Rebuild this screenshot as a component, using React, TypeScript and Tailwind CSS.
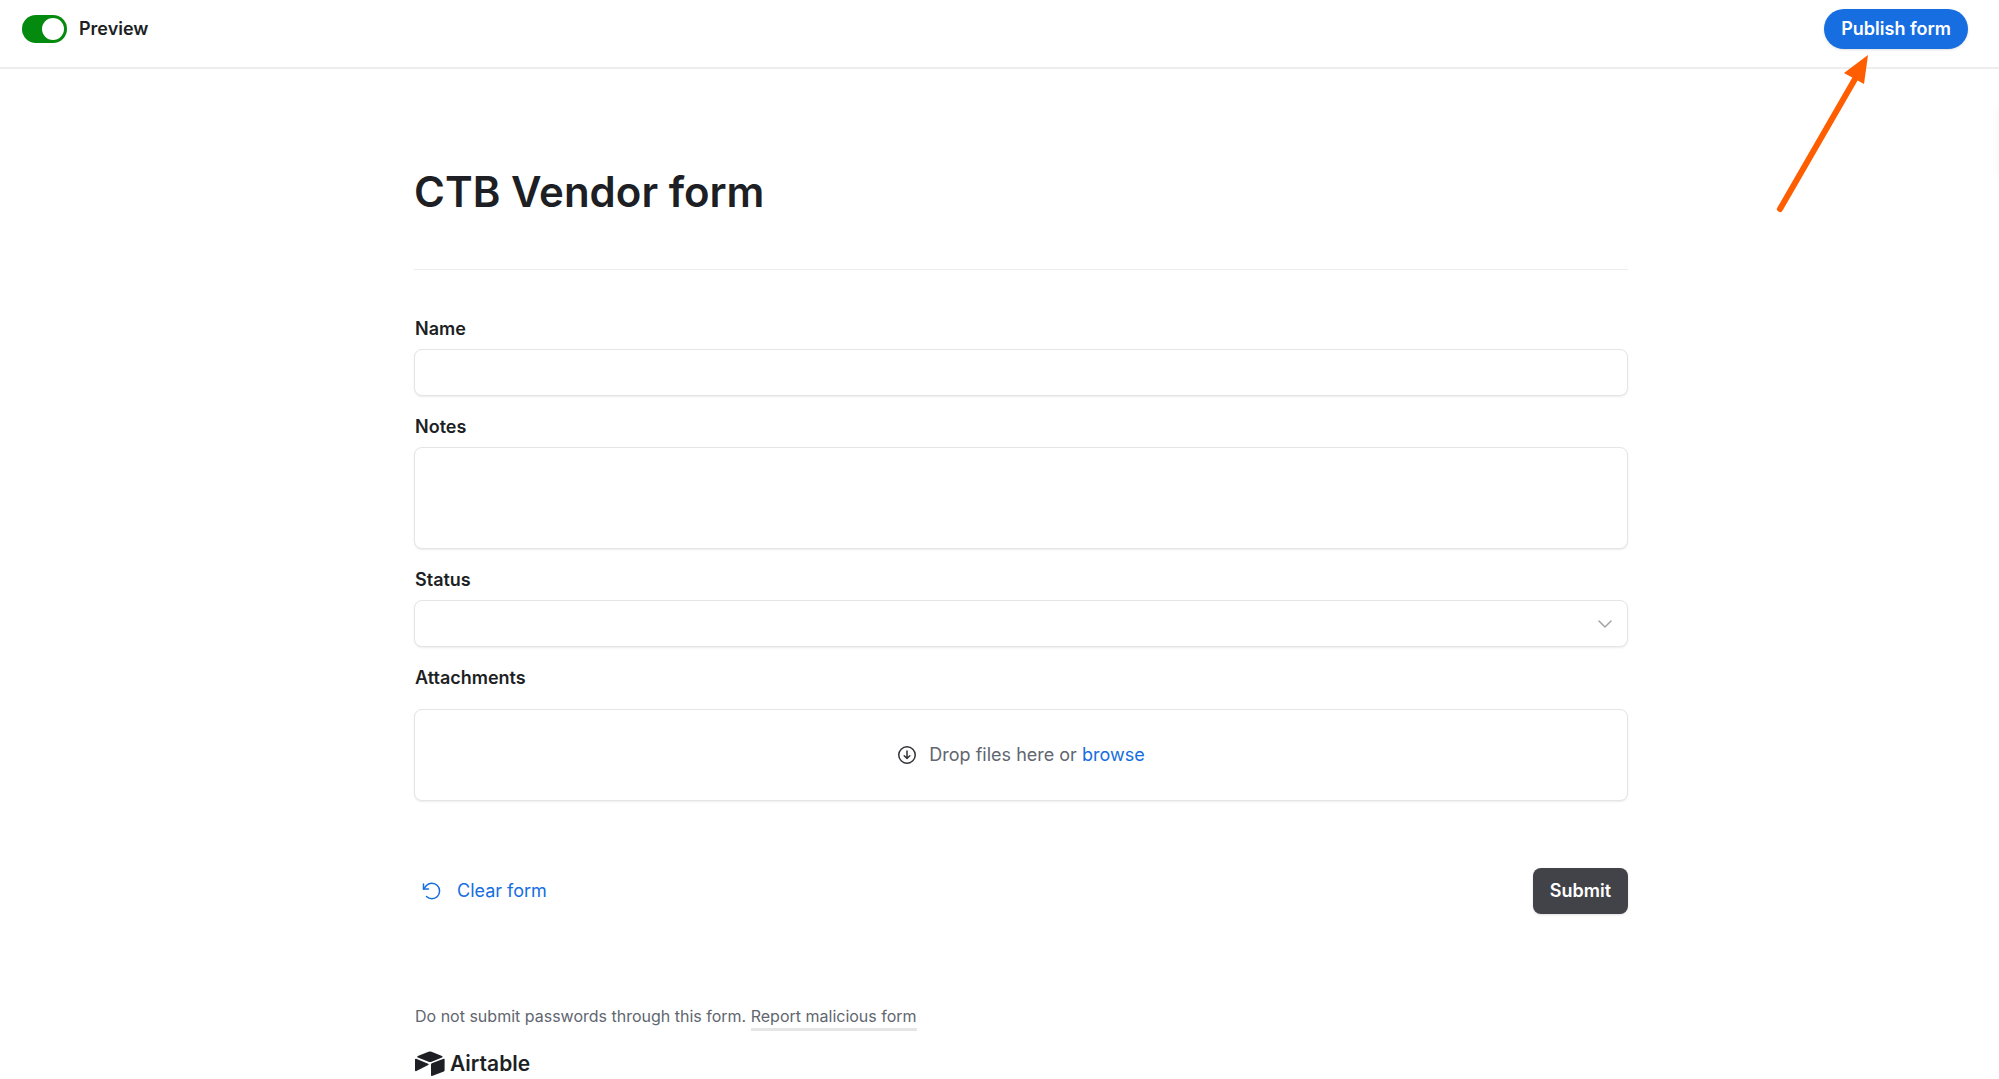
import { useState } from "react";

const fieldBox =
  "w-full rounded-lg border border-[#e5e5e5] bg-white shadow-[0_1px_2px_rgba(0,0,0,0.08)] outline-none focus:border-[#166ee1]";
const fieldLabel = "pl-px text-lg leading-6 font-semibold";

function TopBar() {
  const [preview, setPreview] = useState(true);

  return (
    <header className="flex items-start justify-between border-b-2 border-[#ededed] pt-[9px] pr-[31px] pb-[18px] pl-[22px]">
      <label className="flex h-10 cursor-pointer items-center gap-3 text-lg font-semibold">
        <input
          type="checkbox"
          role="switch"
          checked={preview}
          onChange={(e) => setPreview(e.target.checked)}
          className="peer sr-only"
        />
        <span className="flex h-7 w-[45px] items-center justify-start rounded-full bg-gray-300 p-[3px] peer-checked:justify-end peer-checked:bg-[#048a0e]">
          <span className="size-[22px] rounded-full bg-white" />
        </span>
        Preview
      </label>

      <div className="relative">
        <button
          type="button"
          className="h-10 rounded-full bg-[#166ee1] px-[17px] text-lg font-semibold text-white shadow-sm"
        >
          Publish form
        </button>
        <PointerArrow />
      </div>
    </header>
  );
}

/* Callout arrow pointing at the publish button */
function PointerArrow() {
  return (
    <svg
      viewBox="0 0 96 162"
      className="pointer-events-none absolute top-[43px] right-[100px] h-[162px] w-24"
      aria-hidden="true"
    >
      <path d="M8 157L83 27" stroke="#ff5e00" strokeWidth="6" strokeLinecap="round" fill="none" />
      <path d="M96 3L72 21L92 32Z" fill="#ff5e00" />
    </svg>
  );
}

function DownCircleIcon() {
  return (
    <svg viewBox="0 0 20 20" className="size-5" fill="none" stroke="#333438" strokeWidth="1.5" aria-hidden="true">
      <circle cx="10" cy="10" r="8.25" />
      <path d="M10 6v7.500M7.200 10.700l2.800 2.800 2.800-2.800" strokeLinecap="round" strokeLinejoin="round" />
    </svg>
  );
}

function ResetIcon() {
  return (
    <svg
      viewBox="0 0 20 20"
      className="size-5"
      fill="none"
      stroke="currentColor"
      strokeWidth="1.500"
      strokeLinecap="round"
      strokeLinejoin="round"
      aria-hidden="true"
    >
      <path d="M1.500 3v5h5" />
      <path d="M4.500 15.500a7.700 7.700 0 1 0 0-11L1.500 8" />
    </svg>
  );
}

function AirtableMark() {
  return (
    <svg viewBox="0 0 30 26" className="h-[26px] w-[30px]" fill="#1d1f25" aria-hidden="true">
      <path d="M13.500.700a4 4 0 0 1 3 0l10.500 4.200c.8.400.8 1.300 0 1.700L16.600 10.800a4 4 0 0 1-3 0L2.800 6.600c-.8-.4-.8-1.300 0-1.700z" />
      <path d="M16 13.400c0-.6.300-1 .8-1.200L28.600 7.700c.6-.2 1 .1 1 .7v10.900c0 .5-.3.900-.8 1.100L17 25c-.6.200-1-.1-1-.7z" />
      <path d="M0 8.600c0-.7.500-1 1.200-.8l11.900 4.900c.7.300.7.900.1 1.200L1.400 20c-.8.400-1.400.1-1.400-.7z" />
    </svg>
  );
}

function VendorForm() {
  return (
    <form onSubmit={(e) => e.preventDefault()}>
      <div className="flex flex-col gap-[19px]">
        <div className="flex flex-col gap-2">
          <label htmlFor="name" className={fieldLabel}>
            Name
          </label>
          <input id="name" type="text" className={`${fieldBox} h-[47px] px-3 text-lg`} />
        </div>

        <div className="flex flex-col gap-2">
          <label htmlFor="notes" className={fieldLabel}>
            Notes
          </label>
          <textarea id="notes" className={`${fieldBox} h-[102px] resize-none px-3 py-2 text-lg`} />
        </div>

        <div className="flex flex-col gap-2">
          <label htmlFor="status" className={fieldLabel}>
            Status
          </label>
          <div className="relative">
            <select
              id="status"
              defaultValue=""
              className={`${fieldBox} block h-[47px] appearance-none px-3 text-lg`}
            >
              <option value="" />
              <option value="todo">Todo</option>
              <option value="done">Done</option>
            </select>
            <svg
              viewBox="0 0 14 8"
              className="pointer-events-none absolute top-5 right-4 h-2 w-3.5"
              fill="none"
              stroke="#a3a4a8"
              strokeWidth="1.500"
              strokeLinecap="round"
              strokeLinejoin="round"
              aria-hidden="true"
            >
              <path d="M1 1l6 6 6-6" />
            </svg>
          </div>
        </div>

        <div className="flex flex-col gap-[19px]">
          <label htmlFor="attachments" className={fieldLabel}>
            Attachments
          </label>
          <div className={`${fieldBox} flex h-[92px] items-center justify-center gap-3 text-lg text-[#616670]`}>
            <DownCircleIcon />
            <p>
              Drop files here or{" "}
              <button id="attachments" type="button" className="text-[#166ee1]">
                browse
              </button>
            </p>
          </div>
        </div>
      </div>

      <div className="mt-[67px] flex items-center justify-between">
        <button type="reset" className="flex items-center gap-[15px] pl-2 text-lg text-[#166ee1]">
          <ResetIcon />
          Clear form
        </button>
        <button
          type="submit"
          className="h-[46px] rounded-lg bg-[#414348] px-[17px] text-lg font-semibold text-white shadow-sm"
        >
          Submit
        </button>
      </div>
    </form>
  );
}

export default function App() {
  return (
    <div className="relative min-h-screen overflow-hidden bg-white font-['Inter',sans-serif] text-[#1d1f25]">
      <TopBar />
      {/* Closed side panel, only its shadow reaches into view */}
      <div className="absolute top-[107px] left-full h-[70px] w-10 shadow-[0_0_8px_rgba(0,0,0,0.05)]" />
      <main className="pl-[43px]">
        <div className="mx-auto max-w-[1214px]">
          <h1 className="mt-[97px] text-[42px] leading-[52px] font-semibold">CTB Vendor form</h1>
          <hr className="mt-[51px] mb-[47px] border-[#ededed]" />
          <VendorForm />

          <footer className="mt-[90px] pl-px">
            <p className="text-base leading-6 text-[#616670]">
              Do not submit passwords through this form.{" "}
              <a href="#report" className="border-b-[3px] border-[#e5e5e5] pb-0.5">
                Report malicious form
              </a>
            </p>
            <a href="#airtable" className="mt-[22px] flex items-center gap-[5px]">
              <AirtableMark />
              <span className="text-[21px] leading-7 font-semibold">Airtable</span>
            </a>
          </footer>
        </div>
      </main>
    </div>
  );
}
